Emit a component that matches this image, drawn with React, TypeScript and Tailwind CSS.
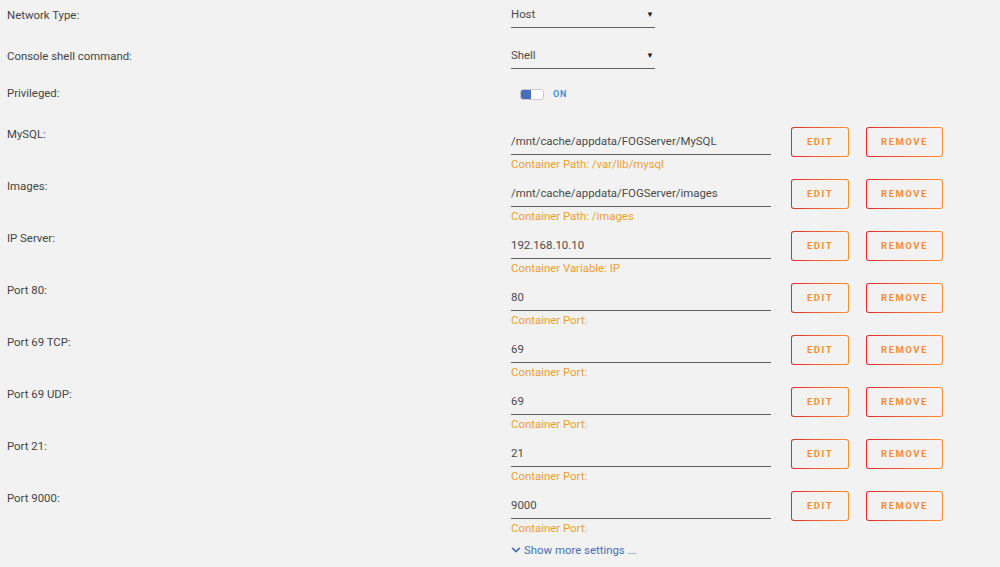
import { FaChevronDown } from "react-icons/fa";

type Mapping = {
  label: string;
  value: string;
  hint: string;
};

const mappings: Mapping[] = [
  { label: "MySQL:", value: "/mnt/cache/appdata/FOGServer/MySQL", hint: "Container Path: /var/lib/mysql" },
  { label: "Images:", value: "/mnt/cache/appdata/FOGServer/images", hint: "Container Path: /images" },
  { label: "IP Server:", value: "192.168.10.10", hint: "Container Variable: IP" },
  { label: "Port 80:", value: "80", hint: "Container Port:" },
  { label: "Port 69 TCP:", value: "69", hint: "Container Port:" },
  { label: "Port 69 UDP:", value: "69", hint: "Container Port:" },
  { label: "Port 21:", value: "21", hint: "Container Port:" },
  { label: "Port 9000:", value: "9000", hint: "Container Port:" },
];

function GradientButton({ label, width }: { label: string; width: string }) {
  return (
    <button
      className={`${width} h-[30px] rounded-[3px] bg-gradient-to-r from-[#e22828] to-[#ff8c2f] p-px`}
    >
      <span className="flex h-full w-full items-center justify-center rounded-[2px] bg-[#f2f2f2] text-[9.5px] font-bold tracking-[0.16em] text-[#f98b35]">
        {label}
      </span>
    </button>
  );
}

function SelectRow({ label, value }: { label: string; value: string }) {
  return (
    <div className="flex h-[41px]">
      <div className="ml-[7px] w-[504px] pt-[7px] leading-4">{label}</div>
      <div className="mt-[3px] flex h-[25px] w-[144px] items-center justify-between border-b border-[#5f5f5f] text-[#4a4a4a]">
        <span>{value}</span>
        <span className="mr-px text-[8px] text-[#222]">▼</span>
      </div>
    </div>
  );
}

export default function App() {
  return (
    <div className="h-[567px] w-full overflow-hidden bg-[#f2f2f2] font-['Roboto',sans-serif] text-[11.4px] text-[#444]">
      <SelectRow label="Network Type:" value="Host" />
      <SelectRow label="Console shell command:" value="Shell" />

      <div className="flex h-[44px] items-start">
        <div className="ml-[7px] w-[504px] pt-[3px] leading-4">Privileged:</div>
        <div className="ml-[9px] mt-[6px] flex items-center gap-[9px]">
          <div className="flex h-[11px] w-[24px] overflow-hidden rounded-[3px] border border-[#c9c9c9] bg-white">
            <div className="h-full w-[10px] bg-[#486dba]" />
          </div>
          <span className="text-[9px] font-semibold tracking-[0.08em] text-[#3a8fd8]">ON</span>
        </div>
      </div>

      {mappings.map((m) => (
        <div key={m.label} className="flex h-[52px]">
          <div className="ml-[7px] w-[504px] leading-4">{m.label}</div>
          <div className="flex flex-col pt-px">
            <div className="flex h-[30px] items-center">
              <div className="flex h-[25px] w-[260px] items-center border-b border-[#5f5f5f] text-[#4a4a4a]">
                {m.value}
              </div>
              <div className="ml-[20px]">
                <GradientButton label="EDIT" width="w-[58px]" />
              </div>
              <div className="ml-[17px]">
                <GradientButton label="REMOVE" width="w-[77px]" />
              </div>
            </div>
            <div className="-mt-px leading-4 text-[#f0a02c]">{m.hint}</div>
          </div>
        </div>
      ))}

      <div className="ml-[511px] flex items-center gap-[3px] leading-4 text-[#486dba]">
        <FaChevronDown className="h-[10px] w-[10px]" />
        <span>Show more settings ...</span>
      </div>
    </div>
  );
}
